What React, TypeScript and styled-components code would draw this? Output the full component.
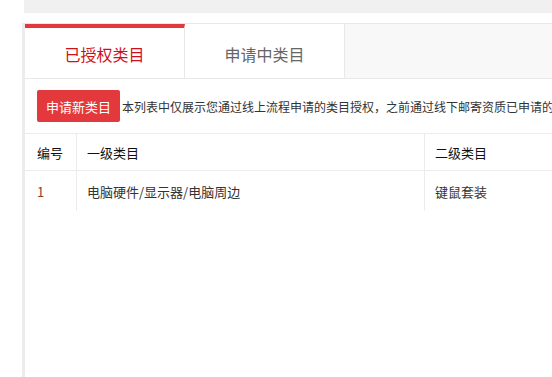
import styled, { createGlobalStyle } from "styled-components";

const GlobalStyle = createGlobalStyle`
  html, body {
    margin: 0;
    padding: 0;
    background: #fff;
    overflow: hidden;
  }
  body {
    font-family: "Noto Sans CJK SC", "Noto Sans", sans-serif;
    color: #333;
  }
`;

const Page = styled.div`
  padding-left: 22px;
  height: 377px;
  display: flex;
  flex-direction: column;
`;

const TopBar = styled.div`
  height: 13px;
  margin-left: 2px;
  background: #f0f0f0;
`;

const Panel = styled.div`
  flex: 1;
  margin-top: 10px;
  border-left: 3px solid #ececec;
  display: flex;
  flex-direction: column;
  min-width: 0;
`;

const TabBar = styled.div`
  display: flex;
  height: 54px;
  border-top: 1px solid #e8e8e8;
  border-bottom: 1px solid #e8e8e8;
  background: #f8f8f8;
`;

const Tab = styled.div<{ $active?: boolean }>`
  width: 160px;
  box-sizing: border-box;
  display: flex;
  align-items: center;
  justify-content: center;
  padding-top: ${(p) => (p.$active ? "1px" : "5px")};
  background: #fff;
  border-right: 1px solid #e8e8e8;
  border-top: ${(p) => (p.$active ? "4px solid #e4393c" : "none")};
  font-size: 16px;
  color: ${(p) => (p.$active ? "#d0101a" : "#666")};
`;

const Toolbar = styled.div`
  display: flex;
  align-items: center;
  gap: 2px;
  padding: 11px 0 11px 12px;
  white-space: nowrap;
  overflow: hidden;
`;

const AddButton = styled.button`
  flex-shrink: 0;
  height: 32px;
  padding: 0 9px;
  border: none;
  border-radius: 2px;
  background: #e4393c;
  color: #fff;
  font-family: inherit;
  font-size: 13px;
  cursor: pointer;
`;

const Notice = styled.span`
  font-size: 12px;
  color: #333;
`;

const Table = styled.div`
  display: flex;
  flex-direction: column;
`;

const Row = styled.div<{ $head?: boolean }>`
  display: grid;
  grid-template-columns: 52px 348px 1fr;
  height: ${(p) => (p.$head ? "36px" : "40px")};
  border-top: 1px solid #ececec;
  font-size: 13px;
  color: ${(p) => (p.$head ? "#111" : "#333")};
`;

const Cell = styled.div`
  display: flex;
  align-items: center;
  padding-left: 10px;
  border-right: 1px solid #ececec;
  white-space: nowrap;
  &:first-child {
    padding-left: 12px;
  }
  &:last-child {
    border-right: none;
  }
`;

const Index = styled.span`
  color: #8a3d2a;
`;

const rows = [{ id: 1, first: "电脑硬件/显示器/电脑周边", second: "键鼠套装" }];

const App = () => {
  return (
    <>
      <GlobalStyle />
      <Page>
        <TopBar />
        <Panel>
          <TabBar>
            <Tab $active>已授权类目</Tab>
            <Tab>申请中类目</Tab>
          </TabBar>
          <Toolbar>
            <AddButton>申请新类目</AddButton>
            <Notice>
              本列表中仅展示您通过线上流程申请的类目授权，之前通过线下邮寄资质已申请的类目将不在此处展示
            </Notice>
          </Toolbar>
          <Table>
            <Row $head>
              <Cell>编号</Cell>
              <Cell>一级类目</Cell>
              <Cell>二级类目</Cell>
            </Row>
            {rows.map((r) => (
              <Row key={r.id}>
                <Cell>
                  <Index>{r.id}</Index>
                </Cell>
                <Cell>{r.first}</Cell>
                <Cell>{r.second}</Cell>
              </Row>
            ))}
          </Table>
        </Panel>
      </Page>
    </>
  );
};

export default App;
